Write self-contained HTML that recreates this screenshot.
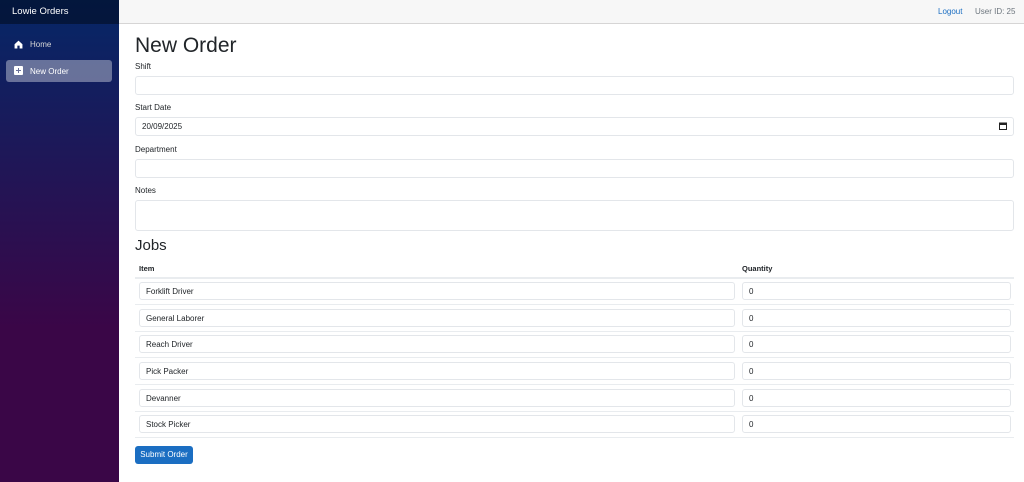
<!DOCTYPE html>
<html><head><meta charset="utf-8"><style>
*{box-sizing:border-box;margin:0;padding:0}
body{width:1024px;height:482px;overflow:hidden;font-family:"Liberation Sans",Arial,sans-serif;background:#fff;color:#212529;position:relative}
.a{position:absolute}
.side{left:0;top:0;width:119px;height:482px;background:linear-gradient(180deg,#052767 0%,#3a0647 68%)}
.brand{left:0;top:0;width:119px;height:24px;background:rgba(0,0,0,0.4);color:#fff;font-size:9.5px;padding:6px 0 0 12px}
.nav{color:#d7d7d7;font-size:8px}
.top{left:119px;top:0;width:905px;height:24px;background:#f7f7f7;border-bottom:1px solid #d6d5d5}
.lbl{font-size:8px;color:#212529}
.inp{border:1px solid #e3e6ea;border-radius:3px;background:#fff;font-size:8px;color:#212529;padding:0 6px;display:flex;align-items:center}
.line{height:1px;background:#e9ecef;left:135px;width:879px}
</style></head><body>
<div class="a side"></div>
<div class="a brand">Lowie Orders</div>
<svg class="a" style="left:14px;top:40px" width="9" height="9" viewBox="0 0 16 16"><path d="M8 1 L1 7.5 V15 H6 V10 H10 V15 H15 V7.5 Z" fill="#fff"/></svg>
<div class="a nav" style="left:30px;top:40px;color:#d7d7d7">Home</div>
<div class="a" style="left:6px;top:60px;width:106px;height:22px;background:rgba(255,255,255,0.37);border-radius:3px"></div>
<div class="a" style="left:14px;top:66px;width:9px;height:9px;background:#fff;border-radius:1px"></div>
<div class="a" style="left:16px;top:70px;width:5px;height:1px;background:#6a7199"></div>
<div class="a" style="left:18px;top:68px;width:1px;height:5px;background:#6a7199"></div>
<div class="a nav" style="left:30px;top:67px;color:#fff">New Order</div>
<div class="a top"></div>
<div class="a" style="left:938px;top:7px;font-size:8px;color:#1b6ec2">Logout</div>
<div class="a" style="left:975px;top:7px;font-size:8px;color:#6c757d">User ID: 25</div>
<div class="a" style="left:135px;top:34px;font-size:21px;color:#212529">New Order</div>
<div class="a lbl" style="left:135px;top:62px">Shift</div>
<div class="a inp" style="left:135px;top:76px;width:879px;height:19px"></div>
<div class="a lbl" style="left:135px;top:103px">Start Date</div>
<div class="a inp" style="left:135px;top:117px;width:879px;height:19px">20/09/2025</div>
<svg class="a" style="left:999px;top:122px" width="8" height="8" viewBox="0 0 8 8"><rect x="0.5" y="1" width="7" height="6.5" fill="none" stroke="#222" stroke-width="1"/><rect x="0.5" y="1" width="7" height="2" fill="#222"/></svg>
<div class="a lbl" style="left:135px;top:145px">Department</div>
<div class="a inp" style="left:135px;top:159px;width:879px;height:19px"></div>
<div class="a lbl" style="left:135px;top:186px">Notes</div>
<div class="a inp" style="left:135px;top:200px;width:879px;height:31px"></div>
<div class="a" style="left:135px;top:237px;font-size:15px">Jobs</div>
<div class="a" style="left:139px;top:264px;font-size:7.5px;font-weight:bold">Item</div>
<div class="a" style="left:742px;top:264px;font-size:7.5px;font-weight:bold">Quantity</div>
<div class="a line" style="top:277px;height:2px"></div>
<div class="a inp" style="left:139px;top:282px;width:596px;height:18px">Forklift Driver</div><div class="a inp" style="left:742px;top:282px;width:269px;height:18px">0</div><div class="a line" style="top:304px"></div>
<div class="a inp" style="left:139px;top:309px;width:596px;height:18px">General Laborer</div><div class="a inp" style="left:742px;top:309px;width:269px;height:18px">0</div><div class="a line" style="top:331px"></div>
<div class="a inp" style="left:139px;top:335px;width:596px;height:18px">Reach Driver</div><div class="a inp" style="left:742px;top:335px;width:269px;height:18px">0</div><div class="a line" style="top:357px"></div>
<div class="a inp" style="left:139px;top:362px;width:596px;height:18px">Pick Packer</div><div class="a inp" style="left:742px;top:362px;width:269px;height:18px">0</div><div class="a line" style="top:384px"></div>
<div class="a inp" style="left:139px;top:389px;width:596px;height:18px">Devanner</div><div class="a inp" style="left:742px;top:389px;width:269px;height:18px">0</div><div class="a line" style="top:411px"></div>
<div class="a inp" style="left:139px;top:415px;width:596px;height:18px">Stock Picker</div><div class="a inp" style="left:742px;top:415px;width:269px;height:18px">0</div><div class="a line" style="top:437px"></div>
<div class="a" style="left:135px;top:446px;width:58px;height:18px;background:#1b6ec2;border-radius:3px;color:#fff;font-size:8px;text-align:center;line-height:18px">Submit Order</div>
</body></html>
